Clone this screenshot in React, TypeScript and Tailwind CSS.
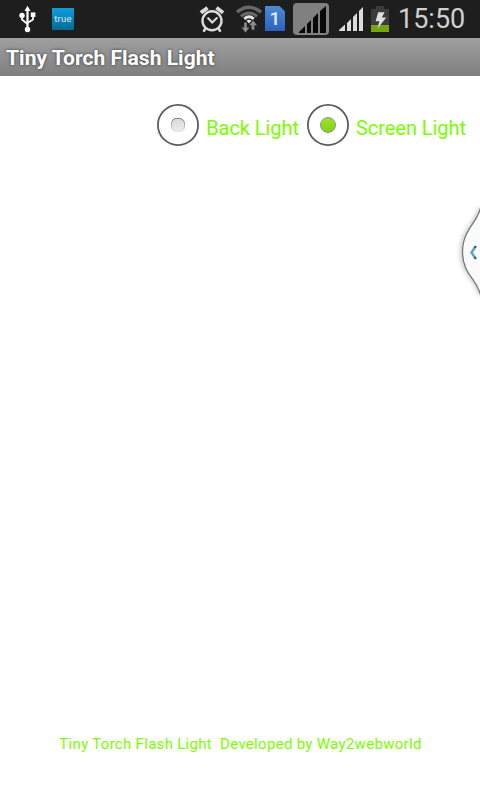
import { useState } from 'react';

function UsbIcon() {
  return (
    <svg width="18" height="28" viewBox="0 0 18 28" fill="none" stroke="#fff" strokeWidth="1.8" className="ml-[18px]">
      <path d="M9.5 5v18" strokeWidth="2.2" />
      <path d="M4 11v3.5l5.5 4.5M15 10v4.5L9.5 18" />
      <path d="M9.5 0.8l3 5.2h-6z" fill="#fff" stroke="none" />
      <circle cx="4" cy="10.4" r="2.7" fill="#fff" stroke="none" />
      <rect x="12.8" y="7.4" width="4.6" height="4.6" fill="#fff" stroke="none" />
      <circle cx="9.5" cy="24.5" r="2.7" fill="#fff" stroke="none" />
    </svg>
  );
}

function AlarmIcon() {
  return (
    <svg width="26" height="28" viewBox="0 0 26 28" fill="none" stroke="#dcdcdc" strokeLinecap="round" className="ml-[125px]">
      <circle cx="13" cy="15.8" r="9.5" strokeWidth="2.4" />
      <path d="M9.2 13.2l4 4.2 4.6-4.4" strokeWidth="2.1" />
      <path d="M3.4 6.6L7 3.9M22.6 6.6L19 3.9" strokeWidth="3.8" strokeLinecap="square" />
      <path d="M6.4 23.8l-1.4 2M19.6 23.8l1.4 2" strokeWidth="2.6" />
    </svg>
  );
}

function WifiIcon() {
  return (
    <svg width="26" height="28" viewBox="0 0 26 28" fill="none" className="ml-[11px]">
      <path d="M1 7.2Q13-2.8 25 7.2" stroke="#686868" strokeWidth="3.4" />
      <path d="M4.9 11.4Q13 4.6 21.1 11.4" stroke="#686868" strokeWidth="2.8" />
      <path d="M8.2 13.8Q13 9.8 17.8 13.8" stroke="#e4e4e4" strokeWidth="2.8" />
      <path d="M10.4 15.6q2.6-1.8 5.2 0L13 18.4z" fill="#e4e4e4" />
      <path d="M8.2 17.5h2.6v5.1h2.6L9.5 27.4l-3.9-4.8h2.6zM15.6 24.8v-4.6h-2.4l3.9-4.8 3.9 4.8h-2.6v4.6z" fill="#8c8c8c" />
    </svg>
  );
}

function SimIcon() {
  return (
    <div className="relative ml-[3px] h-[26px] w-5 text-center text-[19px] leading-[26px] text-[#e4e9f2]">
      <svg width="20" height="26" viewBox="0 0 20 26" className="absolute inset-0">
        <defs>
          <linearGradient id="sim" x1="0" y1="0" x2="0" y2="1">
            <stop offset="0" stopColor="#4c8ad2" />
            <stop offset="1" stopColor="#2d60c0" />
          </linearGradient>
        </defs>
        <path d="M0 0h14.5L20 5.5V25H0z" fill="url(#sim)" />
      </svg>
      <span className="relative font-medium">1</span>
    </div>
  );
}

function BatteryIcon() {
  return (
    <svg width="18" height="26" viewBox="0 0 18 26" className="ml-2">
      <path d="M5 0h8v3h5v16H0V3h5z" fill="#3c3c3c" />
      <path d="M0 19h18v7H0z" fill="#74a512" />
      <path d="M7.2 6.2h6.3l-2.7 5.2h4.4L6.6 22.5l1.8-7.3H4.6z" fill="#e0e0e0" />
    </svg>
  );
}

function StatusBar() {
  return (
    <div className="flex h-[38px] items-center bg-[#1e1e1e]">
      <UsbIcon />
      <div className="ml-4 flex h-[22px] w-[22px] items-center justify-center bg-linear-to-b from-[#0c9ddd] to-[#086996] text-[9.5px] leading-none tracking-[0.2px] text-[#d5edf6]">
        true
      </div>
      <AlarmIcon />
      <WifiIcon />
      <SimIcon />
      <div className="ml-2 flex h-8 w-9 items-end justify-end rounded-[4px] bg-[#808080] pr-[3px] pb-[2px]">
        <svg width="27" height="27" viewBox="0 0 27 27" fill="#080808">
          <path d="M0 27v-1l6-6v7zM8 27v-9l4-4v13zM14 27V12l5-5v20zM21 27V5L27 0v27z" />
        </svg>
      </div>
      <svg width="24" height="24" viewBox="0 0 24 24" fill="#dcdcdc" className="ml-[10px]">
        <path d="M0 24v-1l6-5.5V24zM8 24v-8l4-4v12zM14 24V10l4-4v18zM20 24V4l4-4v24z" />
      </svg>
      <BatteryIcon />
      <span className="ml-[9px] text-[27px] leading-[38px] whitespace-nowrap text-[#d0d0d0]">15:50</span>
    </div>
  );
}

interface LightOptionProps {
  label: string;
  checked: boolean;
  onSelect: () => void;
}

function LightOption({ label, checked, onSelect }: LightOptionProps) {
  return (
    <button type="button" role="radio" aria-checked={checked} onClick={onSelect} className="flex h-12 items-center">
      <svg width="42" height="42" viewBox="0 0 42 42" className="shrink-0">
        <defs>
          <linearGradient id="on" x1="0" y1="0" x2="0" y2="1">
            <stop offset="0" stopColor="#9de427" />
            <stop offset="1" stopColor="#80d119" />
          </linearGradient>
          <linearGradient id="off" x1="0" y1="0" x2="0" y2="1">
            <stop offset="0" stopColor="#dadada" />
            <stop offset="1" stopColor="#ebebeb" />
          </linearGradient>
          <linearGradient id="rim" x1="0" y1="0" x2="0" y2="1">
            <stop offset="0" stopColor="#777" />
            <stop offset="1" stopColor="#e2e2e2" />
          </linearGradient>
        </defs>
        <circle cx="21" cy="21" r="20.1" fill="#fff" stroke="#5c5c5e" strokeWidth="1.8" />
        {checked ? (
          <circle cx="21" cy="21" r="7.5" fill="url(#on)" stroke="#8b9a80" />
        ) : (
          <rect x="14.5" y="14.5" width="13" height="13" rx="5" fill="url(#off)" stroke="url(#rim)" />
        )}
      </svg>
      <span className="relative top-[3px] ml-[7px] text-[20px] tracking-[-0.05px] whitespace-nowrap text-[#7cfc00]">
        {label}
      </span>
    </button>
  );
}

export default function App() {
  const [light, setLight] = useState('screen');

  return (
    <div className="relative flex h-[800px] w-[480px] flex-col overflow-hidden bg-white font-[Roboto,sans-serif]">
      <StatusBar />

      {/* Title bar */}
      <div className="flex h-[38px] items-center bg-linear-to-b from-[#9f9f9f] to-[#7f7f7f] pt-[3px] pl-[6px]">
        <h1 className="text-[21px] font-bold tracking-[0.03px] whitespace-nowrap text-white [text-shadow:0_0_3px_#333]">
          Tiny Torch Flash Light
        </h1>
      </div>

      {/* Light source */}
      <div role="radiogroup" className="mt-[25px] flex justify-end gap-2 pr-[14px]">
        <LightOption label="Back Light" checked={light === 'back'} onSelect={() => setLight('back')} />
        <LightOption label="Screen Light" checked={light === 'screen'} onSelect={() => setLight('screen')} />
      </div>

      {/* Edge handle */}
      <svg width="26" height="92" viewBox="0 0 26 92" fill="none" className="absolute top-[206px] right-0">
        <defs>
          <filter id="glow" x="-50%" y="-20%" width="200%" height="140%">
            <feGaussianBlur stdDeviation="2" />
          </filter>
        </defs>
        <path d="M26 2C24 17 8 23 8 46S24 73 26 89" stroke="#bbb" strokeWidth="3" filter="url(#glow)" />
        <path d="M27 0C24 17 8.5 23 8.5 46S24 73 27 91z" fill="#f9fafa" stroke="#777" strokeWidth="1.3" />
        <path d="M21.5 40.5L17.5 46.5l4 6" stroke="#5aa2c6" strokeWidth="2.4" />
        <path d="M22 40l-1.5 2M20.5 51l1.5 2" stroke="#31566d" strokeWidth="2" />
      </svg>

      <p className="mt-auto mb-[45px] pl-px text-center text-[15px] leading-[22px] tracking-[0.3px] whitespace-pre text-[#7cfc00]">
        {'Tiny Torch Flash Light  Developed by Way2webworld'}
      </p>
    </div>
  );
}
